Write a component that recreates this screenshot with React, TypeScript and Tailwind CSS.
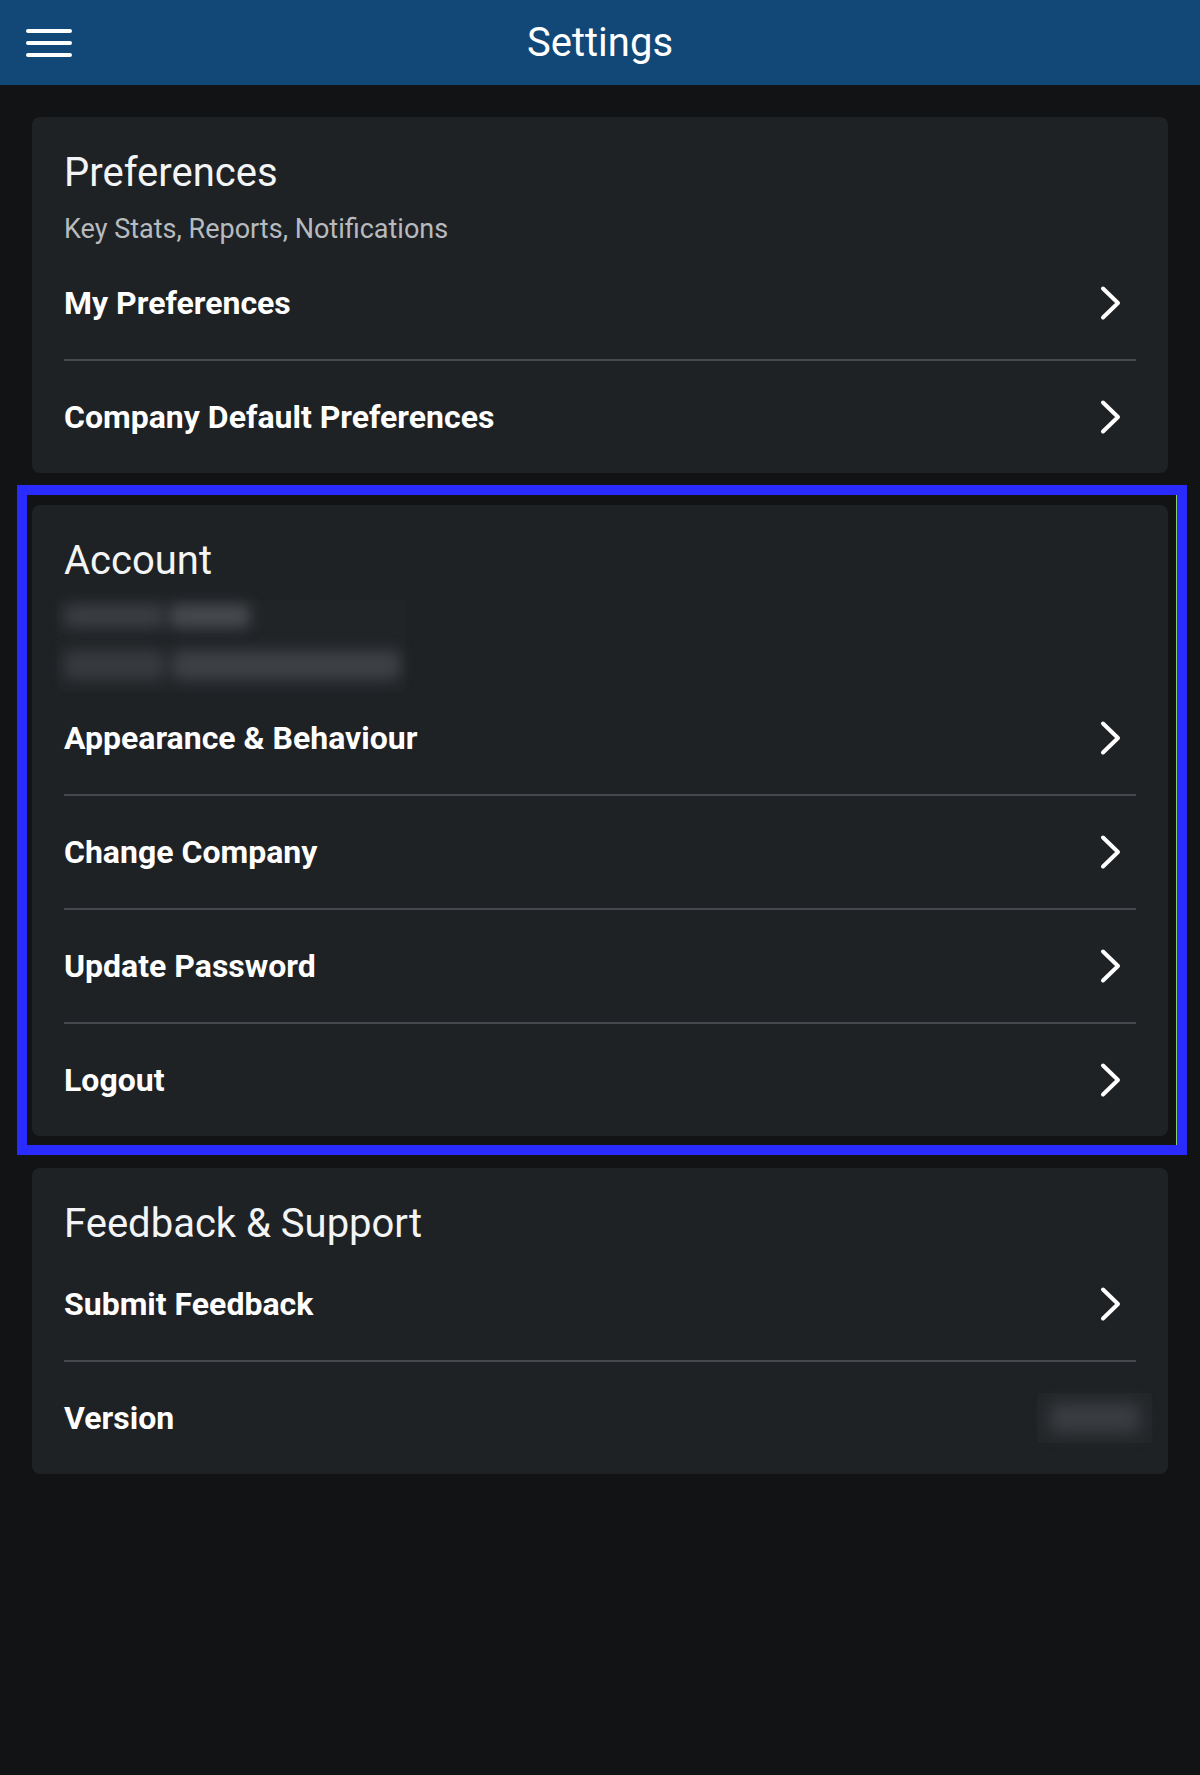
import React from "react";

const Chevron = () => (
  <svg width="24" height="40" viewBox="0 0 24 40" className="mr-[13px] shrink-0">
    <path
      d="M4 5.5 L19 20 L4 34.5"
      fill="none"
      stroke="#ffffff"
      strokeWidth="4"
      strokeLinecap="round"
      strokeLinejoin="round"
    />
  </svg>
);

const Divider = () => <div className="h-[2px] bg-[#45484c]" />;

const Row = ({ label, children }: { label: string; children?: React.ReactNode }) => (
  <div className="flex h-[112px] items-center justify-between">
    <span className="text-[32px] font-bold leading-none text-white">{label}</span>
    {children ?? <Chevron />}
  </div>
);

const CardTitle = ({ children }: { children: React.ReactNode }) => (
  <h2 className="text-[40px] leading-[48px] font-normal text-[#f3f4f5]">{children}</h2>
);

export default function App() {
  return (
    <div className="min-h-[1775px] bg-[#121315] font-['Roboto','Liberation_Sans',sans-serif]">
      <header className="grid h-[85px] grid-cols-[1fr_auto_1fr] items-center bg-[#124877] px-[26px]">
        <div className="flex w-[46px] flex-col gap-[8px]">
          <span className="h-[4px] rounded-full bg-white" />
          <span className="h-[4px] rounded-full bg-white" />
          <span className="h-[4px] rounded-full bg-white" />
        </div>
        <h1 className="text-[40px] leading-none font-normal text-white">Settings</h1>
        <div />
      </header>

      <main className="flex flex-col gap-8 px-8 pt-8">
        {/* Preferences */}
        <section className="rounded-lg bg-[#1f2225] pt-8 pl-8 pr-8">
          <CardTitle>Preferences</CardTitle>
          <p className="mt-4 mb-[2px] text-[27px] leading-[32px] text-[#b7bbbf]">
            Key Stats, Reports, Notifications
          </p>
          <Row label="My Preferences" />
          <Divider />
          <Row label="Company Default Preferences" />
        </section>

        {/* Account */}
        <div className="relative">
          <section className="rounded-lg bg-[#1f2225] pt-8 pl-8 pr-8">
            <CardTitle>Account</CardTitle>
            <div className="mt-[15px] h-[82px]">
              <div className="-ml-[7px] flex h-[92px] w-[349px] flex-col gap-[22px] bg-[#212427] pt-[4px] pl-[7px]">
                <div className="flex gap-[6px] blur-[7px]">
                  <span className="h-[24px] w-[100px] rounded-md bg-[#3a3d41]" />
                  <span className="h-[24px] w-[80px] rounded-md bg-[#46494d]" />
                </div>
                <div className="flex gap-[8px] blur-[7px]">
                  <span className="h-[30px] w-[100px] rounded-md bg-[#373a3e]" />
                  <span className="h-[30px] w-[228px] rounded-md bg-[#3d4044]" />
                </div>
              </div>
            </div>
            <Row label="Appearance & Behaviour" />
            <Divider />
            <Row label="Change Company" />
            <Divider />
            <Row label="Update Password" />
            <Divider />
            <Row label="Logout" />
          </section>
          <div className="pointer-events-none absolute -top-[20px] -left-[15px] -right-[19px] -bottom-[19px] border-[10px] border-[#2a2cff]">
            <div className="absolute top-0 right-0 bottom-0 w-px bg-[#8ccf6a]" />
          </div>
        </div>

        {/* Feedback & Support */}
        <section className="rounded-lg bg-[#1f2225] pt-8 pl-8 pr-8">
          <CardTitle>Feedback &amp; Support</CardTitle>
          <Row label="Submit Feedback" />
          <Divider />
          <Row label="Version">
            <div className="-mr-4 flex h-[50px] w-[115px] items-center justify-center bg-[#232629]">
              <span className="h-[30px] w-[90px] rounded-md bg-[#3a3d41] blur-[8px]" />
            </div>
          </Row>
        </section>
      </main>
    </div>
  );
}
